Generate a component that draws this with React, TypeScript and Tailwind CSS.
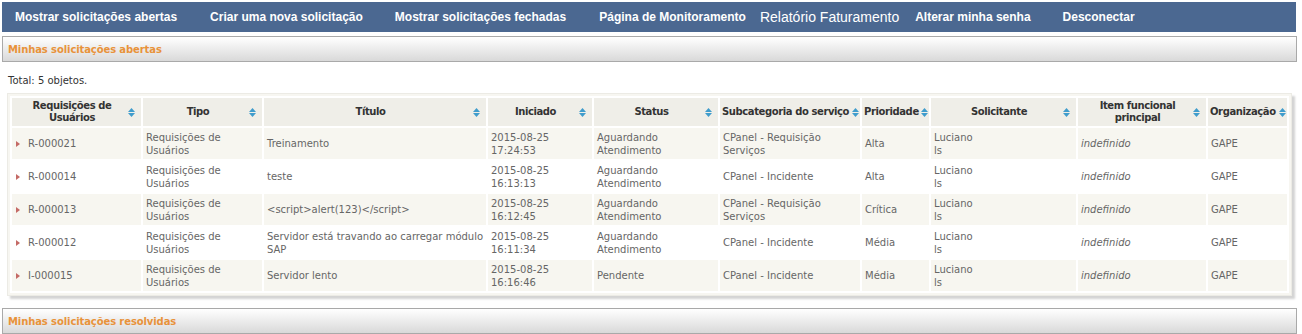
import React from "react";

const nav = [
  { label: "Mostrar solicitações abertas", cls: "ml-[13px] font-bold text-[12px]" },
  { label: "Criar uma nova solicitação", cls: "ml-[33px] font-bold text-[12px]" },
  { label: "Mostrar solicitações fechadas", cls: "ml-[32px] font-bold text-[12px]" },
  { label: "Página de Monitoramento", cls: "ml-[33px] font-bold text-[12px]" },
  { label: "Relatório Faturamento", cls: "ml-[14px] text-[14px]" },
  { label: "Alterar minha senha", cls: "ml-[16px] font-bold text-[12px]" },
  { label: "Desconectar", cls: "ml-[32px] font-bold text-[12px]" },
];

const columns = [
  { title: ["Requisições de", "Usuários"], w: "w-[129px]" },
  { title: ["Tipo"], w: "w-[119px]" },
  { title: ["Título"], w: "w-[222px]" },
  { title: ["Iniciado"], w: "w-[104px]" },
  { title: ["Status"], w: "w-[124px]" },
  { title: ["Subcategoria do serviço"], w: "w-[140px]", tight: true },
  { title: ["Prioridade"], w: "w-[67px]", tight: true },
  { title: ["Solicitante"], w: "w-[145px]" },
  { title: ["Item funcional", "principal"], w: "w-[128px]" },
  { title: ["Organização"], w: "w-[79px]", tight: true },
];

const rows = [
  { id: "R-000021", title: ["Treinamento"], date: "17:24:53", status: ["Aguardando", "Atendimento"], sub: ["CPanel - Requisição", "Serviços"], prio: "Alta" },
  { id: "R-000014", title: ["teste"], date: "16:13:13", status: ["Aguardando", "Atendimento"], sub: ["CPanel - Incidente"], prio: "Alta" },
  { id: "R-000013", title: ["<script>alert(123)</script>"], date: "16:12:45", status: ["Aguardando", "Atendimento"], sub: ["CPanel - Requisição", "Serviços"], prio: "Crítica" },
  { id: "R-000012", title: ["Servidor está travando ao carregar módulo", "SAP"], date: "16:11:34", status: ["Aguardando", "Atendimento"], sub: ["CPanel - Incidente"], prio: "Média" },
  { id: "I-000015", title: ["Servidor lento"], date: "16:16:46", status: ["Pendente"], sub: ["CPanel - Incidente"], prio: "Média" },
];

const Lines = ({ lines }: { lines: string[] }) => (
  <>
    {lines.map((l, i) => (
      <React.Fragment key={i}>
        {i > 0 && <br />}
        {l}
      </React.Fragment>
    ))}
  </>
);

const SortIcon = () => (
  <svg width="7" height="9" viewBox="0 0 7 9" className="shrink-0">
    <polygon points="0,4 3.5,0 7,4" fill="#3f9ccc" />
    <polygon points="0,5 3.5,9 7,5" fill="#3f9ccc" />
  </svg>
);

const SectionBar = ({ title }: { title: string }) => (
  <div className="ml-[2px] mr-[5px] h-[26px] border border-[#a9a9a9] bg-gradient-to-b from-[#ffffff] to-[#d9d9d9] flex items-center pl-[5px]">
    <span className="text-[10px] font-bold text-[#e8923a] tracking-[-0.1px]">{title}</span>
  </div>
);

export default function App() {
  return (
    <div className="w-[1302px] h-[334px] overflow-hidden bg-white pt-[2px]" style={{ fontFamily: "'DejaVu Sans', Verdana, sans-serif" }}>
      <nav className="ml-[2px] mr-[6px] h-[30px] bg-[#4b6891] flex items-center text-white" style={{ fontFamily: "'Liberation Sans', Arial, sans-serif" }}>
        {nav.map((n) => (
          <span key={n.label} className={n.cls}>
            {n.label}
          </span>
        ))}
      </nav>

      <div className="mt-[4px]">
        <SectionBar title="Minhas solicitações abertas" />
      </div>

      <p className="mt-[11px] ml-[8px] text-[10px] text-[#333]">Total: 5 objetos.</p>

      <div className="mt-[5px] ml-[7px] w-[1285px] bg-[#f7f6f1] border border-[#ecebe5] p-[2px] shadow-[3px_3px_2px_#d4d4d4]">
        <table className="w-[1279px] table-fixed border-separate border-spacing-[2px] bg-white text-[10px] text-[#666]">
          <colgroup>
            {columns.map((c, i) => (
              <col key={i} className={c.w} />
            ))}
          </colgroup>
          <thead>
            <tr>
              {columns.map((c, i) => (
                <th key={i} className={`h-[28px] bg-[#efeee8] font-bold text-[#333] leading-[12px] tracking-[-0.4px] ${c.tight ? "pl-[2px] pr-[1px]" : "pl-[4px] pr-[6px]"}`}>
                  <div className="flex items-center">
                    <span className={c.tight ? "flex-1 text-left whitespace-nowrap" : "flex-1 text-center"}>
                      <Lines lines={c.title} />
                    </span>
                    <SortIcon />
                  </div>
                </th>
              ))}
            </tr>
          </thead>
          <tbody>
            {rows.map((r, i) => {
              const bg = i % 2 === 0 ? "bg-[#f7f6f0]" : "bg-white";
              const td = `${bg} h-[31px] px-[3px] align-middle leading-[13px] whitespace-nowrap overflow-hidden`;
              return (
                <tr key={r.id}>
                  <td className={`${td} pl-[4px]`}>
                    <span className="inline-flex items-center">
                      <svg width="4" height="6" viewBox="0 0 4 6" className="mr-[8px]">
                        <polygon points="0,0 4,3 0,6" fill="#c46a66" />
                      </svg>
                      {r.id}
                    </span>
                  </td>
                  <td className={td}>
                    Requisições de
                    <br />
                    Usuários
                  </td>
                  <td className={td}>
                    <Lines lines={r.title} />
                  </td>
                  <td className={td}>
                    2015-08-25
                    <br />
                    {r.date}
                  </td>
                  <td className={td}>
                    <Lines lines={r.status} />
                  </td>
                  <td className={td}>
                    <Lines lines={r.sub} />
                  </td>
                  <td className={td}>{r.prio}</td>
                  <td className={td}>
                    Luciano
                    <br />
                    ls
                  </td>
                  <td className={`${td} italic`}>indefinido</td>
                  <td className={td}>GAPE</td>
                </tr>
              );
            })}
          </tbody>
        </table>
      </div>

      <div className="mt-[12px]">
        <SectionBar title="Minhas solicitações resolvidas" />
      </div>
    </div>
  );
}
